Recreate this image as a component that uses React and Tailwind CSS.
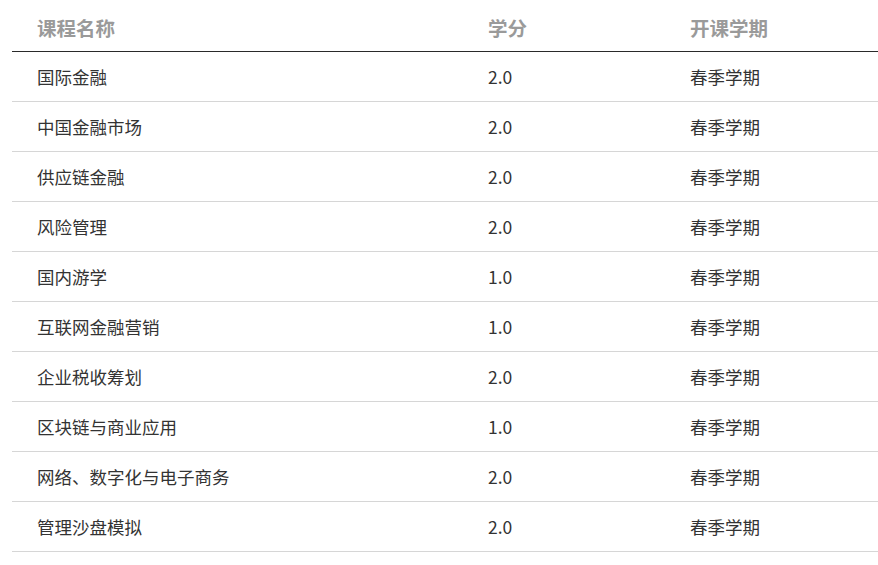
import React from "react";

const courses = [
  { name: "国际金融", credit: "2.0", term: "春季学期" },
  { name: "中国金融市场", credit: "2.0", term: "春季学期" },
  { name: "供应链金融", credit: "2.0", term: "春季学期" },
  { name: "风险管理", credit: "2.0", term: "春季学期" },
  { name: "国内游学", credit: "1.0", term: "春季学期" },
  { name: "互联网金融营销", credit: "1.0", term: "春季学期" },
  { name: "企业税收筹划", credit: "2.0", term: "春季学期" },
  { name: "区块链与商业应用", credit: "1.0", term: "春季学期" },
  { name: "网络、数字化与电子商务", credit: "2.0", term: "春季学期" },
  { name: "管理沙盘模拟", credit: "2.0", term: "春季学期" },
];

const App = () => {
  return (
    <div
      className="w-[878px] h-[565px] bg-white pl-[12px] overflow-hidden"
      style={{ fontFamily: '"Microsoft YaHei", "Noto Sans CJK SC", "Noto Sans", sans-serif' }}
    >
      {/* Header */}
      <div className="grid grid-cols-[451px_202px_1fr] h-[52px] border-b border-[#2a2a2a] items-center pt-[4px] text-[19.5px] font-bold text-[#9a9a9a]">
        <div className="pl-[25px]">课程名称</div>
        <div className="pl-[25px]">学分</div>
        <div className="pl-[25px]">开课学期</div>
      </div>

      {/* Rows */}
      {courses.map((c) => (
        <div
          key={c.name}
          className="grid grid-cols-[451px_202px_1fr] h-[50px] border-b border-[#d6d6d6] items-center pt-[2px] text-[17.5px] text-[#333333]"
        >
          <div className="pl-[25px]">{c.name}</div>
          <div className="pl-[25px]">{c.credit}</div>
          <div className="pl-[25px]">{c.term}</div>
        </div>
      ))}
    </div>
  );
};

export default App;
